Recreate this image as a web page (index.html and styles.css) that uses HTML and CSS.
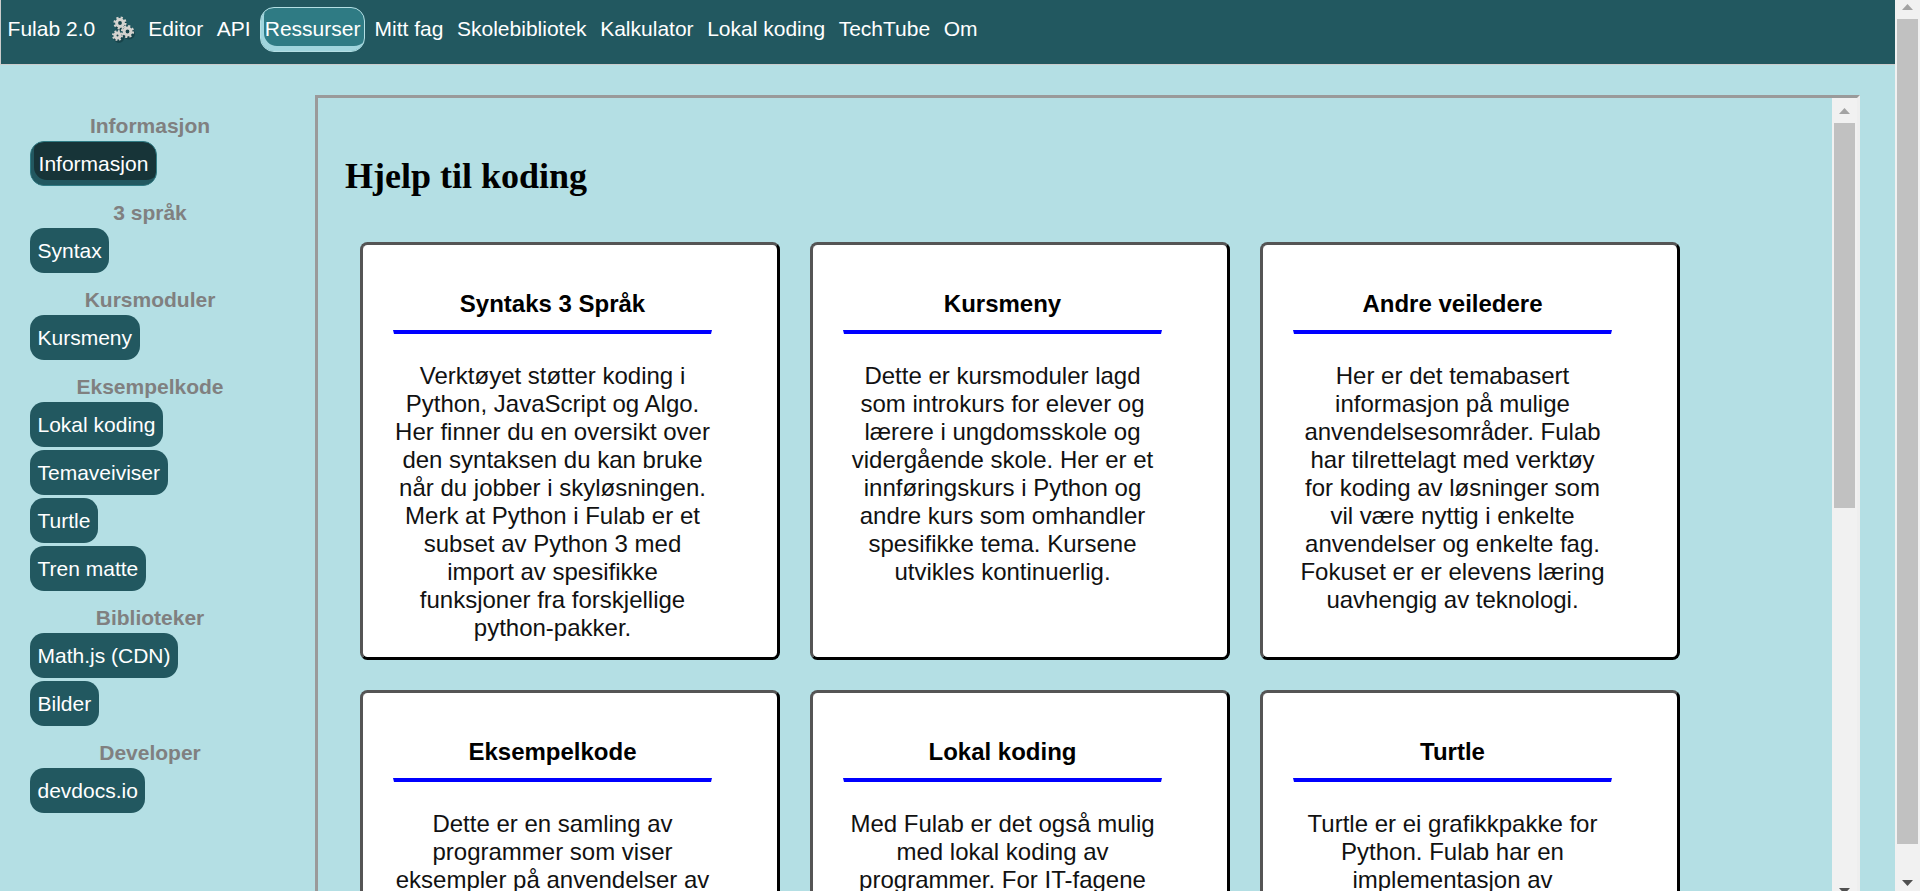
FILE: index.html
```html
<!DOCTYPE html>
<html lang="no">
<head>
<meta charset="utf-8">
<title>Fulab 2.0</title>
<link rel="stylesheet" href="styles.css">
</head>
<body>
<div class="page">
  <nav class="nav">
    <a>Fulab 2.0</a>
    <svg class="gears" viewBox="0 0 26 28" width="26" height="28">
      <g class="gear-shadow"><circle cx="12" cy="10" r="6"/><circle cx="20" cy="18.500" r="6"/><circle cx="10" cy="23" r="5"/></g>
      <g class="gear-teeth">
        <circle cx="11" cy="8" r="5.300" stroke-dasharray="2.08 2.08"/>
        <circle cx="18.500" cy="16.500" r="5.300" stroke-dasharray="2.08 2.08"/>
        <circle cx="8.500" cy="20.500" r="4.200" stroke-dasharray="1.65 1.65"/>
      </g>
      <g class="gear-ring">
        <circle cx="11" cy="8" r="3.400"/>
        <circle cx="18.500" cy="16.500" r="3.400"/>
        <circle cx="8.500" cy="20.500" r="2.500"/>
      </g>
    </svg>
    <a>Editor</a>
    <a>API</a>
    <a class="current">Ressurser</a>
    <a>Mitt fag</a>
    <a>Skolebibliotek</a>
    <a>Kalkulator</a>
    <a>Lokal koding</a>
    <a>TechTube</a>
    <a>Om</a>
  </nav>
  <div class="body">
    <aside class="side">
      <section><h4>Informasjon</h4><a class="active">Informasjon</a></section>
      <section><h4>3 språk</h4><a>Syntax</a></section>
      <section><h4>Kursmoduler</h4><a>Kursmeny</a></section>
      <section><h4>Eksempelkode</h4><a>Lokal koding</a><a>Temaveiviser</a><a>Turtle</a><a>Tren matte</a></section>
      <section><h4>Biblioteker</h4><a>Math.js (CDN)</a><a>Bilder</a></section>
      <section><h4>Developer</h4><a>devdocs.io</a></section>
    </aside>
    <div class="frame">
      <main class="content">
        <h1>Hjelp til koding</h1>
        <div class="cards">
          <article><h3>Syntaks 3 Språk</h3><p>Verktøyet støtter koding i Python, JavaScript og Algo. Her finner du en oversikt over den syntaksen du kan bruke når du jobber i skyløsningen. Merk at Python i Fulab er et subset av Python 3 med import av spesifikke funksjoner fra forskjellige python-pakker.</p></article>
          <article><h3>Kursmeny</h3><p>Dette er kursmoduler lagd som introkurs for elever og lærere i ungdomsskole og vidergående skole. Her er et innføringskurs i Python og andre kurs som omhandler spesifikke tema. Kursene utvikles kontinuerlig.</p></article>
          <article><h3>Andre veiledere</h3><p>Her er det temabasert informasjon på mulige anvendelsesområder. Fulab har tilrettelagt med verktøy for koding av løsninger som vil være nyttig i enkelte anvendelser og enkelte fag. Fokuset er er elevens læring uavhengig av teknologi.</p></article>
          <article><h3>Eksempelkode</h3><p>Dette er en samling av programmer som viser eksempler på anvendelser av</p></article>
          <article><h3>Lokal koding</h3><p>Med Fulab er det også mulig<br>med lokal koding av programmer. For IT-fagene</p></article>
          <article><h3>Turtle</h3><p>Turtle er ei grafikkpakke for Python. Fulab har en implementasjon av</p></article>
        </div>
      </main>
      <div class="bar inner">
        <svg class="up" width="11" height="6"><path d="M0 6L5.500 0L11 6Z"/></svg>
        <div class="thumb"></div>
        <svg class="down" width="11" height="6"><path d="M0 0L5.500 6L11 0Z"/></svg>
      </div>
    </div>
  </div>
</div>
<div class="bar outer">
  <svg class="up" width="11" height="6"><path d="M0 6L5.500 0L11 6Z"/></svg>
  <div class="thumb"></div>
  <svg class="down" width="11" height="6"><path d="M0 0L5.500 6L11 0Z"/></svg>
</div>
</body>
</html>
```
FILE: styles.css
```css
* { box-sizing: border-box; }
body {
  margin: 0;
  display: flex;
  height: 891px;
  overflow: hidden;
  background: #b4dfe4;
  font-family: Arial, "Liberation Sans", sans-serif;
  font-size: 21px;
  line-height: 24px;
}
h1, h3, h4, p { margin: 0; }
.page { flex: 1; min-width: 0; }
.nav {
  display: flex;
  align-items: center;
  gap: 13.6px;
  height: 65px;
  padding: 0 0 6px 6.6px;
  border-left: 1px solid #ccc;
  border-bottom: 1px solid #ccc;
  background: #225860;
  color: #fff;
  white-space: nowrap;
}
.gear-shadow { fill: #12383e; opacity: .6; }
.gear-teeth { fill: none; stroke: #d5d3cf; stroke-width: 2.6; }
.gear-ring { fill: none; stroke: #d5d3cf; stroke-width: 3; }
.nav .current {
  height: 45px;
  margin: 0 -4px;
  padding: 9px 3.5px 0;
  border: 1px solid #b4dfe4;
  border-radius: 14px;
  background: #2f7b84;
  box-shadow: inset 3px -5px 0 #a0d5dd;
}
.body { display: flex; padding: 30px 35px 0 30px; }
.side { width: 240px; margin-right: 45px; padding-top: 19px; }
.side section { display: flex; flex-direction: column; align-items: flex-start; gap: 3px; margin-bottom: 15px; }
.side h4 { width: 100%; color: #808080; font-size: 21px; text-align: center; }
.side a {
  height: 45px;
  padding: 10.5px 7.5px;
  border-radius: 14px;
  background: #225860;
  color: #fff;
}
.side .active {
  padding: 9.5px 7.6px;
  border: 1px solid #2f7b84;
  background: #173438;
  box-shadow: inset 3px -5px 0 #225860;
}
.frame {
  flex: 1;
  display: flex;
  height: 813px;
  border: 3px solid;
  border-color: #9a9a9a #eee #eee #9a9a9a;
}
.content { flex: 1; padding: 58px 0 0 27px; overflow: hidden; }
h1 { font: bold 36px/41px "Times New Roman", "Liberation Serif", serif; }
.cards {
  display: grid;
  grid-template-columns: repeat(3, 420px);
  grid-auto-rows: 418px;
  gap: 30px;
  padding: 45px 0 0 15px;
}
.cards article {
  padding: 45px 65px 0 30px;
  border: 3px solid;
  border-color: #555 #000 #000 #555;
  border-radius: 7.5px;
  background: #fff;
  font-size: 24px;
  line-height: 28px;
  text-align: center;
}
h3 { font-size: 24px; padding-bottom: 12px; }
.cards p {
  padding-top: 28px;
  border: 1px solid transparent;
  border-top: 4px solid #00f;
  color: #111;
}
.bar { width: 25px; display: flex; flex-direction: column; align-items: center; background: #f1f1f1; }
.bar svg { display: block; flex: none; }
.thumb { width: 21px; background: #c1c1c1; }
.up { fill: #a3a3a3; }
.down { fill: #505050; }
.outer { padding-top: 4px; }
.outer .thumb { height: 825px; margin: 9px 0 36px; }
.inner { padding-top: 10px; }
.inner .thumb { height: 385px; margin: 9px 0 380px; }
```
